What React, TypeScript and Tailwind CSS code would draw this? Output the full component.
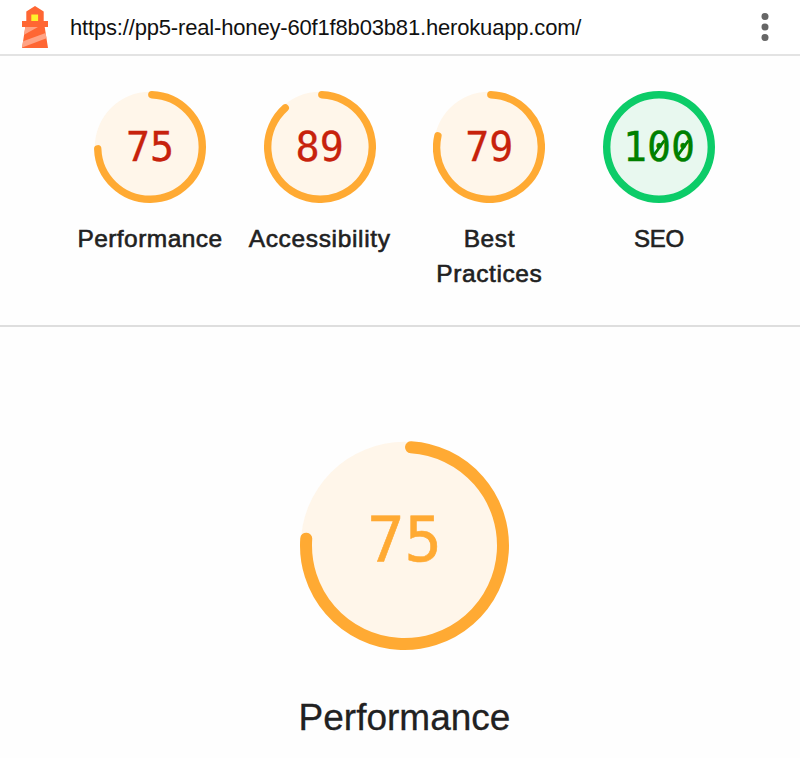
type GaugeProps = {
  score: number;
  size: number;
  radius: number;
  stroke: number;
  from: number;
  to: number;
  color: string;
  fill: string;
  textClass: string;
};

function arcPath(c: number, r: number, from: number, to: number) {
  const point = (deg: number) => {
    const a = (deg * Math.PI) / 180;
    return `${(c + r * Math.sin(a)).toFixed(3)} ${(c - r * Math.cos(a)).toFixed(3)}`;
  };
  return `M${point(from)} A${r} ${r} 0 1 1 ${point(to)}`;
}

function Gauge({ score, size, radius, stroke, from, to, color, fill, textClass }: GaugeProps) {
  const c = size / 2;
  return (
    <div className="grid place-items-center">
      <svg width={size} height={size} className="col-start-1 row-start-1 block">
        <circle cx={c} cy={c} r={radius + stroke / 2 - 0.8} fill={fill} />
        {score === 100 ? (
          <>
            <circle cx={c} cy={c} r={radius} fill="none" stroke={color} strokeWidth={stroke} />
            {/* slashes through the zeros */}
            <path d="M50.6 64.5 61.4 49.5M74.7 64.5 85.5 49.5" stroke="#008000" strokeWidth="2.8" />
          </>
        ) : (
          <path d={arcPath(c, radius, from, to)} fill="none" stroke={color} strokeWidth={stroke} strokeLinecap="round" />
        )}
      </svg>
      <span className={`col-start-1 row-start-1 font-['DejaVu_Sans_Mono',monospace] leading-none ${textClass}`}>{score}</span>
    </div>
  );
}

const categories = [
  { label: "Performance", score: 75, to: 268, labelClass: "text-[24.5px] tracking-[0.44px]" },
  { label: "Accessibility", score: 89, to: 318.4, labelClass: "text-[24.5px] tracking-[0.66px]" },
  { label: "Best Practices", score: 79, to: 282.4, labelClass: "w-[120px] text-[24.5px] tracking-[0.6px]" },
  { label: "SEO", score: 100, to: 360, labelClass: "text-[24px] tracking-[-0.2px]" },
];

function Lighthouse() {
  return (
    <svg width="28" height="42" viewBox="0 0 28 42" className="block">
      <path d="M14 0 22.7 5.5V15H27v6h-3.3L27 42H1L4.3 21H1V15h4.3V5.5z" fill="#ff6633" />
      <path d="M4.3 21H17L3.1 28.8z" fill="#ffa385" />
      <path d="M24.6 27 25.5 32.3 1.1 41.6 2.1 35.2z" fill="#ffa385" />
      <path d="M10.3 8.5h6.8v6.5h-6.8z" fill="#fff12b" />
    </svg>
  );
}

export default function App() {
  return (
    <div className="h-[758px] w-[800px] overflow-hidden bg-[#fefefe] font-['Liberation_Sans',Arial,sans-serif] text-[#212121]">
      <header className="flex h-14 items-center border-b-2 border-[#e3e3e3] bg-white pl-[21px] pr-[31px]">
        <Lighthouse />
        <span className="ml-[21px] pt-[2px] text-[22px] leading-none tracking-[-0.17px] text-[#111]">
          https://pp5-real-honey-60f1f8b03b81.herokuapp.com/
        </span>
        <svg width="8" height="30" viewBox="0 0 8 30" className="ml-auto block" fill="#666">
          <circle cx="4" cy="4.5" r="3.5" />
          <circle cx="4" cy="15" r="3.5" />
          <circle cx="4" cy="25.5" r="3.5" />
        </svg>
      </header>
      <section className="flex h-[271px] justify-center border-b-2 border-[#dedede] pl-[9px] pt-[35px]">
        {categories.map((item) => (
          <div key={item.label} className="flex w-[169.7px] flex-col items-center">
            <Gauge
              score={item.score}
              size={112}
              radius={52.3}
              stroke={7.4}
              from={2}
              to={item.to}
              color={item.score === 100 ? "#0ccc68" : "#ffaa33"}
              fill={item.score === 100 ? "#e8f8ef" : "#fff6ea"}
              textClass={
                item.score === 100
                  ? "text-[40px] text-[#008000] [-webkit-text-stroke:0.3px_#008000]"
                  : "text-[40px] text-[#c7220c] [-webkit-text-stroke:0.3px_#c7220c]"
              }
            />
            <div
              className={`mt-[18px] text-center leading-[35px] [-webkit-text-stroke:0.6px_#212121] ${item.labelClass}`}
            >
              {item.label}
            </div>
          </div>
        ))}
      </section>
      <section className="flex flex-col items-center pl-[9px] pt-[113px]">
        <Gauge
          score={75}
          size={211}
          radius={98.5}
          stroke={12}
          from={3.8}
          to={274}
          color="#ffaa33"
          fill="#fff6ea"
          textClass="pb-[11px] text-[62px] text-[#ffaa33] [-webkit-text-stroke:0.6px_#ffaa33]"
        />
        <h1 className="mt-[44px] text-[37px] leading-[46px] [-webkit-text-stroke:0.3px_#212121]">Performance</h1>
      </section>
    </div>
  );
}
